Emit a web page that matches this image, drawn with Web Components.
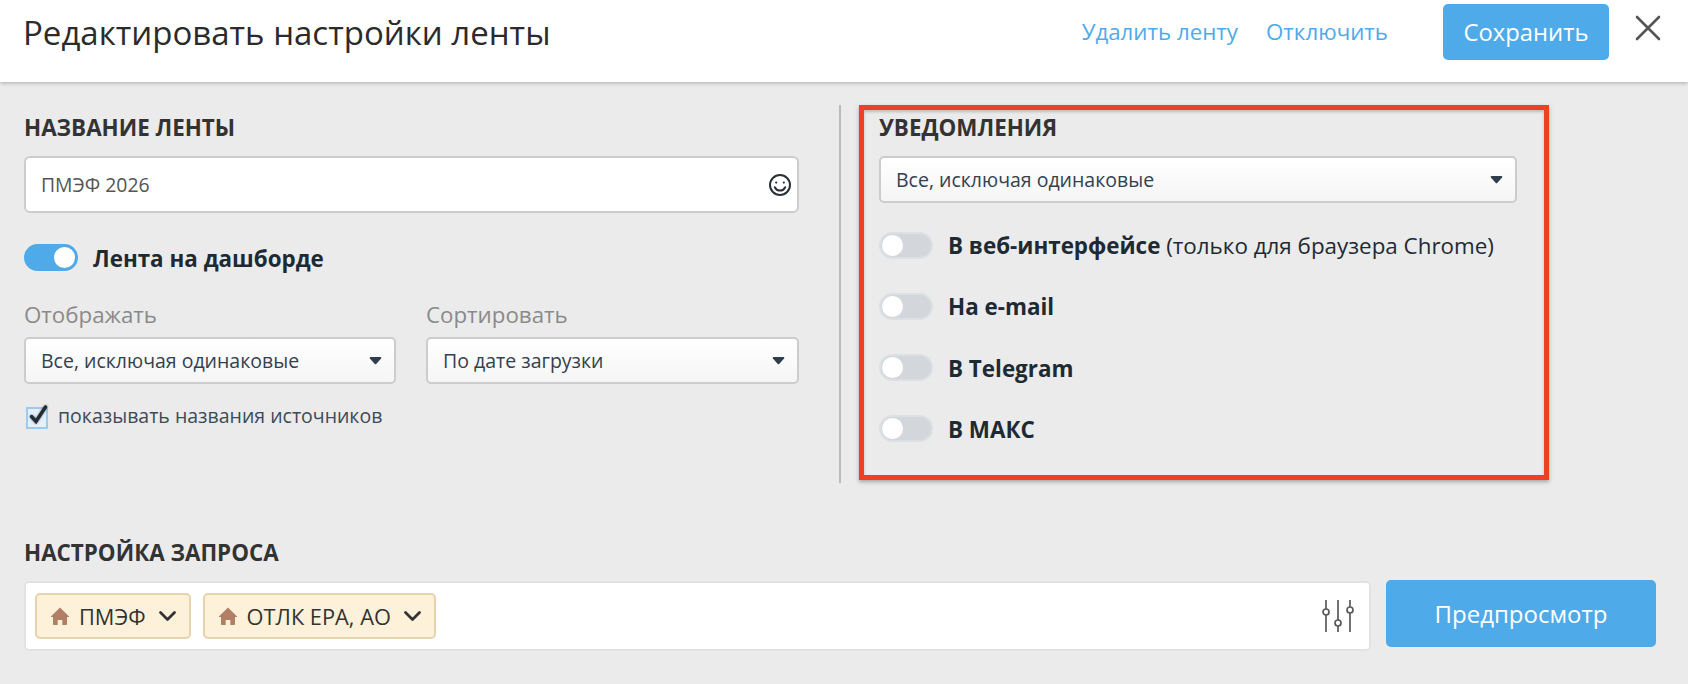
<!DOCTYPE html>
<html lang="ru"><head><meta charset="utf-8"><title>Редактировать настройки ленты</title>
<style>
html,body{margin:0;height:684px;overflow:hidden;background:#ebebeb;font-family:"Open Sans","Noto Sans",sans-serif;color:#2b2b2b}
</style></head><body>
<feed-editor></feed-editor>
<script>
function def(name, css, html){
  customElements.define(name, class extends HTMLElement{
    connectedCallback(){
      if(this.shadowRoot) return;
      const r=this.attachShadow({mode:'open'});
      r.innerHTML='<style>'+css+'</style>'+html;
    }
  });
}
def('section-title',':host{display:block;font-size:22.4px;line-height:28px;font-weight:700;color:#333}','<slot></slot>');
def('text-link',':host{display:block;font-size:22.3px;line-height:28px;color:#4faae9}','<slot></slot>');
def('action-button',':host{display:flex;align-items:center;justify-content:center;background:#4faae9;color:#fff;border-radius:5px;font-size:23.8px}','<slot></slot>');
def('name-input',`:host{display:flex;align-items:center;justify-content:space-between;box-sizing:border-box;height:57px;background:#fff;border:2px solid #ccc;border-radius:6px;padding:0 5px 0 15px;font-size:19.4px;color:#555}
svg{width:24px;height:24px;display:block}`,`<slot></slot><svg viewBox="0 0 24 24" fill="none" stroke="#2b3138" stroke-width="2"><circle cx="12" cy="12" r="10"/><circle cx="8.2" cy="9.6" r="1.1" fill="#2b3138" stroke="none"/><circle cx="15.8" cy="9.6" r="1.1" fill="#2b3138" stroke="none"/><path d="M6.8 14.2c1.2 2.4 3 3.4 5.2 3.4s4-1 5.2-3.4" stroke-linecap="round"/></svg>`);
def('select-box',`:host{display:flex;align-items:center;justify-content:space-between;box-sizing:border-box;height:47px;background:linear-gradient(#fff,#f5f5f5);border:2px solid #ccc;border-radius:5px;padding:0 12px 0 15px;font-size:19.5px;color:#34404e}
svg{width:13px;height:9px;display:block}`,`<slot></slot><svg viewBox="0 0 13 9"><path d="M1.6 1h9.8c.8 0 1.2.8.7 1.4L7.2 7.9c-.4.4-1 .4-1.4 0L.9 2.4C.4 1.8.8 1 1.6 1z" fill="#2f3d4c"/></svg>`);
def('toggle-row',`:host{display:flex;align-items:center;gap:15px;font-size:22.4px;line-height:28px;color:#1e2a33}
.t{box-sizing:border-box;flex:none;width:54px;height:27px;border-radius:14px;background:#d3d7dc;border:2px solid #dcdfe3;display:flex;align-items:center;padding:0 1px}
.k{width:21px;height:21px;border-radius:50%;background:#fff}
:host([on]) .t{background:#4faae9;border-color:#4faae9;justify-content:flex-end}
.x{display:block;margin-top:2px}
::slotted(b){font-weight:700}`,`<span class="t"><span class="k"></span></span><span class="x"><slot></slot></span>`);
def('check-row',`:host{display:flex;align-items:center;gap:10px;font-size:19.5px;line-height:24px;color:#3d4a57}
.c{position:relative;flex:none;box-sizing:border-box;width:22px;height:22px;margin:3px 0 0 2px;background:#e4f1fc;border:2px solid #9ccbf0}
svg{position:absolute;left:0;top:-6px;width:24px;height:24px;overflow:visible;filter:drop-shadow(0 0 1px rgba(0,0,0,.5))}`,`<span class="c"><svg viewBox="0 0 24 24" fill="none" stroke="#232b33" stroke-width="3.4" stroke-linecap="round"><path d="M3.5 13.5l4.5 5L17.5 4"/></svg></span><slot></slot>`);
def('tag-chip',`:host{display:flex;align-items:center;box-sizing:border-box;height:46px;background:#fdf1d9;border:2px solid #e7d2ae;border-radius:5px;padding:0 12px 0 13px;font-size:21.8px;color:#333}
.h{width:20px;height:20px;flex:none;margin-right:9px}.c{width:19px;height:12px;flex:none;margin-left:12px}`,`<svg class="h" viewBox="0 0 20 20"><path d="M10 1.5L.9 10.4c-.3.3-.1.7.3.7H3v7.1c0 .4.3.7.7.7h4v-5h4.6v5h4c.4 0 .7-.3.7-.7v-7.1h1.8c.4 0 .6-.4.3-.7z" fill="#b27f66"/></svg><slot></slot><svg class="c" viewBox="0 0 18 12" fill="none" stroke="#333" stroke-width="2.8" stroke-linecap="round" stroke-linejoin="round"><path d="M2 2.5l7 7 7-7"/></svg>`);
def('query-bar',`:host{display:flex;align-items:center;gap:12px;box-sizing:border-box;height:70px;background:#fff;border:2px solid #e2e2e2;border-radius:5px;padding:0 14px 0 9px}
svg{width:34px;height:34px;margin-left:auto;display:block}`,`<slot></slot><svg viewBox="0 0 34 34" fill="none" stroke="#5a5a5a" stroke-width="1.7"><path d="M5 1v9M5 16v17M17 1v20M17 27v6M29 1v7M29 14v19"/><circle cx="5" cy="13" r="3" fill="#fff"/><circle cx="17" cy="24" r="3" fill="#fff"/><circle cx="29" cy="11" r="3" fill="#fff"/></svg>`);
def('feed-header',`:host{display:flex;align-items:center;box-sizing:border-box;height:82px;padding:0 27px 18px 24px;background:#fff;box-shadow:0 1px 4px rgba(0,0,0,.28);position:relative}
h1{margin:0 auto 0 -1px;font-size:33px;font-weight:400;color:#2b2b2b}
.l{margin-right:28px}
action-button{width:166px;height:56px;margin:0 26px 0 55px}
svg{width:26px;height:26px;display:block;margin-bottom:8px}`,`<h1>Редактировать настройки ленты</h1><text-link class="l">Удалить ленту</text-link><text-link>Отключить</text-link><action-button>Сохранить</action-button><svg viewBox="0 0 26 26" fill="none" stroke="#555" stroke-width="2.6" stroke-linecap="round"><path d="M2 2l22 22M24 2L2 24"/></svg>`);
def('feed-editor',`:host{display:block}
.top{display:grid;grid-template-columns:775px 638px;column-gap:80px;margin:23px 0 0 24px;position:relative;height:378px}
.top::before{content:"";position:absolute;left:815px;top:0;bottom:0;width:2px;background:#bbb}
.left,.right{padding-top:9px}
section-title{margin-bottom:14px}
.two{display:grid;grid-template-columns:372px 373px;column-gap:30px;margin-top:28px}
.muted{font-size:22.3px;line-height:28px;color:#8a8a8a;margin-bottom:8px}
toggle-row.dash{margin-top:29.5px}
check-row{margin-top:20px}
.right toggle-row{margin-bottom:31.3px}
.right select-box{margin-bottom:27px}
.mark{position:absolute;left:835px;top:0;width:690px;height:375px;box-sizing:border-box;border:5px solid #ec4124;box-shadow:0 2px 4px rgba(0,0,0,.3),inset 0 2px 3px rgba(0,0,0,.2);pointer-events:none}
.bottom{padding:0 32px 0 24px;margin-top:56px}
.bottom section-title{margin-bottom:13px}
.q{display:flex;align-items:flex-start;gap:15px}
query-bar{width:1347px;margin-top:1px}
.q action-button{width:270px;height:67px;font-size:24px}`,`<feed-header></feed-header>
<div class="top">
 <div class="left">
  <section-title>НАЗВАНИЕ ЛЕНТЫ</section-title>
  <name-input>ПМЭФ 2026</name-input>
  <toggle-row class="dash" on><b>Лента на дашборде</b></toggle-row>
  <div class="two">
   <div><div class="muted">Отображать</div><select-box>Все, исключая одинаковые</select-box></div>
   <div><div class="muted">Сортировать</div><select-box>По дате загрузки</select-box></div>
  </div>
  <check-row>показывать названия источников</check-row>
 </div>
 <div class="right">
  <section-title>УВЕДОМЛЕНИЯ</section-title>
  <select-box>Все, исключая одинаковые</select-box>
  <toggle-row><span><b>В веб-интерфейсе</b> (только для браузера Chrome)</span></toggle-row>
  <toggle-row><b>На e-mail</b></toggle-row>
  <toggle-row><b>В Telegram</b></toggle-row>
  <toggle-row><b>В МАКС</b></toggle-row>
 </div>
 <div class="mark"></div>
</div>
<div class="bottom">
 <section-title>НАСТРОЙКА ЗАПРОСА</section-title>
 <div class="q"><query-bar><tag-chip>ПМЭФ</tag-chip><tag-chip>ОТЛК ЕРА, АО</tag-chip></query-bar><action-button>Предпросмотр</action-button></div>
</div>`);
</script></body></html>
